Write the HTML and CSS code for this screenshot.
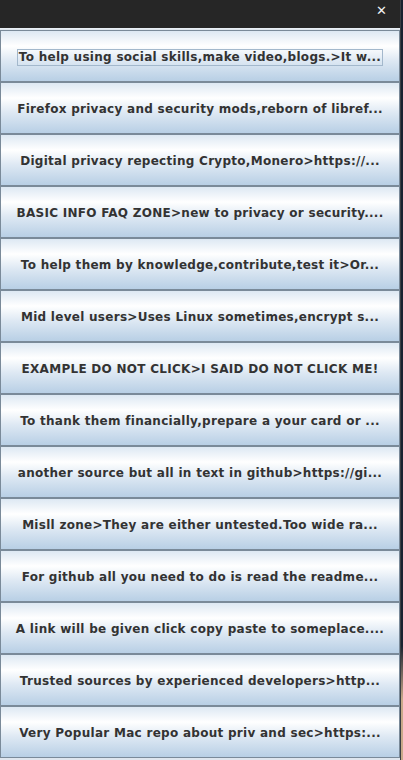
FILE: index.html
```html
<!DOCTYPE html>
<html>
<head>
<meta charset="utf-8">
<link rel="stylesheet" href="styles.css">
</head>
<body>
<div class="window">
  <div class="titlebar"><span class="close">✕</span></div>
  <div class="list">
    <button class="item focused"><span class="label">To help using social skills,make video,blogs.&gt;It w...</span></button>
    <button class="item"><span class="label">Firefox privacy and security mods,reborn of libref...</span></button>
    <button class="item"><span class="label">Digital privacy repecting Crypto,Monero&gt;https://...</span></button>
    <button class="item"><span class="label">BASIC INFO FAQ ZONE&gt;new to privacy or security....</span></button>
    <button class="item"><span class="label">To help them by knowledge,contribute,test it&gt;Or...</span></button>
    <button class="item"><span class="label">Mid level users&gt;Uses Linux sometimes,encrypt s...</span></button>
    <button class="item"><span class="label">EXAMPLE DO NOT CLICK&gt;I SAID DO NOT CLICK ME!</span></button>
    <button class="item"><span class="label">To thank them financially,prepare a your card or ...</span></button>
    <button class="item"><span class="label">another source but all in text in github&gt;https://gi...</span></button>
    <button class="item"><span class="label">Misll zone&gt;They are either untested.Too wide ra...</span></button>
    <button class="item"><span class="label">For github all you need to do is read the readme...</span></button>
    <button class="item"><span class="label">A link will be given click copy paste to someplace....</span></button>
    <button class="item"><span class="label">Trusted sources by experienced developers&gt;http...</span></button>
    <button class="item"><span class="label">Very Popular Mac repo about priv and sec&gt;https:...</span></button>
  </div>
</div>
</body>
</html>
```
FILE: styles.css
```css
html, body {
  margin: 0;
  padding: 0;
  height: 760px;
  overflow: hidden;
}
body {
  background: linear-gradient(#1a2230 0%, #1a2230 85%, #c9a98a 92%, #c9a98a 100%);
  font-family: "DejaVu Sans", sans-serif;
}
.window {
  width: 400px;
  height: 760px;
  background: #dfe6ee;
  border-right: 1px solid #3a3d42;
  display: flex;
  flex-direction: column;
}
.titlebar {
  height: 28px;
  box-sizing: border-box;
  background: #262626;
  border-bottom: 1px solid #e8eef5;
  display: flex;
  align-items: flex-start;
  justify-content: flex-end;
  padding: 4px 13px 0 0;
  flex: none;
  height: 29px;
}
.close {
  color: #f2f2f2;
  font-size: 13px;
  font-weight: bold;
  line-height: 1;
}
.list {
  display: flex;
  flex-direction: column;
  padding-top: 1px;
}
.item {
  height: 52px;
  margin: 0;
  padding: 3px 0 0 0;
  border: 1px solid #7a8a99;
  background: linear-gradient(#dde8f3 0%, #ffffff 30%, #dde8f3 60%, #b8cfe5 100%);
  color: #333333;
  font-family: "DejaVu Sans", sans-serif;
  font-weight: bold;
  font-size: 12px;
  letter-spacing: 0.28px;
  display: flex;
  align-items: center;
  justify-content: center;
  white-space: nowrap;
  flex: none;
  width: 400px;
}
.label {
  padding: 0 1px;
  border: 1px solid transparent;
  line-height: 15px;
}
.focused .label {
  border-color: #a3b8cc;
}
```
